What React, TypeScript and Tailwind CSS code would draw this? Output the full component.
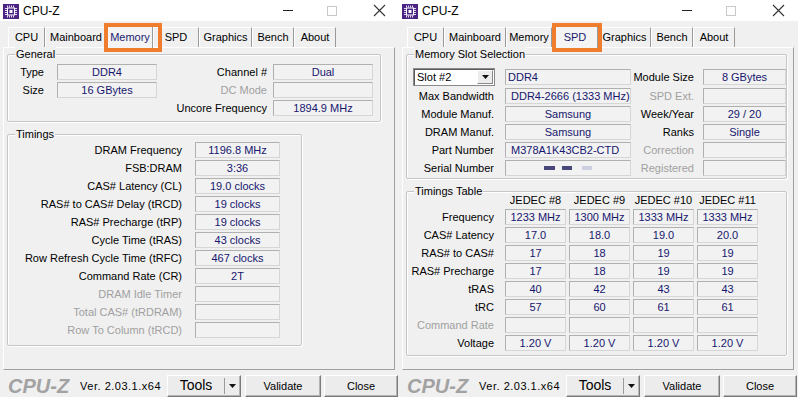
import React from "react";

const VALUE = "text-[#16166e]";
const DIM = "text-[#a0a0a0]";

const tabWidths: Record<string, string> = {
  CPU: "w-[37px]",
  Mainboard: "w-[62px]",
  Memory: "w-[46px]",
  SPD: "w-[46px]",
  Graphics: "w-[53px]",
  Bench: "w-[42px]",
  About: "w-[42px]",
};

function Field({
  children,
  className = "",
  left = false,
}: {
  children?: React.ReactNode;
  className?: string;
  left?: boolean;
}) {
  return (
    <div
      className={`h-[16px] shrink-0 flex items-center border border-t-[#b0b0b0] border-l-[#b0b0b0] border-r-[#d6d6d6] border-b-[#d6d6d6] bg-[#f2f2f2] leading-none whitespace-nowrap ${VALUE} ${
        left ? "justify-start" : "justify-center"
      } ${className}`}
    >
      {children}
    </div>
  );
}

function Group({
  label,
  className,
  children,
}: {
  label: string;
  className: string;
  children: React.ReactNode;
}) {
  return (
    <div
      className={`relative shrink-0 border border-[#c6c6c6] rounded-[2px] shadow-[inset_1px_1px_0_#fff,1px_1px_0_#fff] ${className}`}
    >
      <span className="absolute -top-[8px] left-[7px] bg-[#f0f0f0] px-px leading-[14px]">
        {label}
      </span>
      {children}
    </div>
  );
}

function ChipIcon() {
  return (
    <svg width="16" height="15" viewBox="0 0 16 15">
      <rect width="16" height="15" fill="#4a2581" />
      <rect x="4.5" y="4" width="7" height="7" fill="none" stroke="#fff" strokeWidth="1" />
      <rect x="6.5" y="6" width="3" height="3" fill="#fff" />
      {[5, 7, 9, 11].map((p) => (
        <g key={p} stroke="#e6dcf5" strokeWidth="1">
          <line x1={p - 0.5} y1="1.5" x2={p - 0.5} y2="3.5" />
          <line x1={p - 0.5} y1="11.5" x2={p - 0.5} y2="13.5" />
          <line x1="2" y1={p - 0.5} x2="4" y2={p - 0.5} />
          <line x1="12" y1={p - 0.5} x2="14" y2={p - 0.5} />
        </g>
      ))}
    </svg>
  );
}

function TitleBar() {
  return (
    <div className="h-[21px] bg-white flex items-center shrink-0">
      <div className="ml-[3px] mt-px">
        <ChipIcon />
      </div>
      <span className="ml-[4px] text-[12px] text-black">CPU-Z</span>
      <div className="ml-auto flex items-center mr-[13px]">
        <div className="w-[10px] h-px bg-[#222]" />
        <div className="ml-[34px] w-[10px] h-[10px] border border-[#c8c8c8]" />
        <svg className="ml-[36px]" width="13" height="13" viewBox="0 0 13 13">
          <path d="M1 1 L12 12 M12 1 L1 12" stroke="#333" strokeWidth="1.1" />
        </svg>
      </div>
    </div>
  );
}

function Tabs({ selected }: { selected: string }) {
  return (
    <div className="h-[22px] mt-[4px] pl-[8px] flex items-end shrink-0">
      {Object.keys(tabWidths).map((t) => {
        const on = t === selected;
        return (
          <div
            key={t}
            className={`${tabWidths[t]} flex items-center justify-center border-t border-l border-r border-t-white border-l-white border-r-[#9a9a9a] ${
              on ? "h-[22px] bg-[#f4f4f4] relative z-10 -mb-px text-[#1a1a70]" : "h-[20px]"
            }`}
          >
            {t}
          </div>
        );
      })}
    </div>
  );
}

function BottomBar() {
  return (
    <div className="h-[27px] shrink-0 flex items-start pt-[5px] pl-[8px] pr-px">
      <span className="shrink-0 whitespace-nowrap text-[20px] leading-[22px] italic font-bold text-[#a2a2a2]">
        CPU-Z
      </span>
      <span className="shrink-0 whitespace-nowrap ml-[11px] text-[11px] leading-[23px] tracking-[0.5px]">
        Ver. 2.03.1.x64
      </span>
      <div className="ml-auto flex shrink-0">
        <div className="w-[74px] h-[22px] flex border border-t-white border-l-white border-r-[#7a7a7a] border-b-[#7a7a7a] bg-[#ececec] shadow-[inset_-1px_-1px_0_#b4b4b4]">
          <div className="flex-1 flex items-center justify-center text-[14px] pb-[2px]">Tools</div>
          <div className="w-px my-[2px] bg-[#9a9a9a]" />
          <div className="w-[15px] flex items-center justify-center">
            <svg width="7" height="4" viewBox="0 0 7 4">
              <path d="M0 0 H7 L3.5 4 Z" fill="#111" />
            </svg>
          </div>
        </div>
        <div className="ml-[4px] w-[76px] h-[22px] flex items-center justify-center border border-t-white border-l-white border-r-[#7a7a7a] border-b-[#7a7a7a] bg-[#ececec] shadow-[inset_-1px_-1px_0_#b4b4b4]">
          Validate
        </div>
        <div className="ml-[3px] w-[74px] h-[22px] flex items-center justify-center border border-t-white border-l-white border-r-[#7a7a7a] border-b-[#7a7a7a] bg-[#ececec] shadow-[inset_-1px_-1px_0_#b4b4b4]">
          Close
        </div>
      </div>
    </div>
  );
}

function Window({
  selected,
  boxClass,
  children,
}: {
  selected: string;
  boxClass: string;
  children: React.ReactNode;
}) {
  return (
    <div className="relative w-[399px] h-[397px] flex flex-col bg-[#f0f0f0] overflow-hidden">
      <TitleBar />
      <Tabs selected={selected} />
      <div className="ml-[3px] w-[392px] h-[323px] shrink-0 border border-t-white border-l-white border-r-[#a0a0a0] border-b-[#a0a0a0] pl-[3px] flex flex-col">
        {children}
      </div>
      <BottomBar />
      <div className={`absolute top-[23px] h-[29px] border-[4px] border-[#ef7d2d] z-20 ${boxClass}`} />
    </div>
  );
}

const timings: [string, string, boolean?][] = [
  ["DRAM Frequency", "1196.8 MHz"],
  ["FSB:DRAM", "3:36"],
  ["CAS# Latency (CL)", "19.0 clocks"],
  ["RAS# to CAS# Delay (tRCD)", "19 clocks"],
  ["RAS# Precharge (tRP)", "19 clocks"],
  ["Cycle Time (tRAS)", "43 clocks"],
  ["Row Refresh Cycle Time (tRFC)", "467 clocks"],
  ["Command Rate (CR)", "2T"],
  ["DRAM Idle Timer", "", true],
  ["Total CAS# (tRDRAM)", "", true],
  ["Row To Column (tRCD)", "", true],
];

function MemoryPanel() {
  return (
    <>
      <Group label="General" className="mt-[6px] w-[374px] h-[68px]">
        <div className="pt-[9px] flex flex-col gap-[2px]">
          <div className="flex items-center h-[16px]">
            <span className="w-[36px] text-right">Type</span>
            <Field className="ml-[13px] w-[100px]">DDR4</Field>
            <span className="w-[110px] text-right">Channel #</span>
            <Field className="ml-[6px] w-[100px]">Dual</Field>
          </div>
          <div className="flex items-center h-[16px]">
            <span className="w-[36px] text-right">Size</span>
            <Field className="ml-[13px] w-[100px]">16 GBytes</Field>
            <span className={`w-[110px] text-right ${DIM}`}>DC Mode</span>
            <Field className="ml-[6px] w-[100px]" />
          </div>
          <div className="flex items-center h-[16px]">
            <span className="w-[149px]" />
            <span className="w-[110px] text-right">Uncore Frequency</span>
            <Field className="ml-[6px] w-[100px]">1894.9 MHz</Field>
          </div>
        </div>
      </Group>
      <Group label="Timings" className="mt-[12px] w-[295px] h-[212px]">
        <div className="pt-[7px] flex flex-col gap-[2px]">
          {timings.map(([l, v, dim]) => (
            <div key={l} className="flex items-center h-[16px]">
              <span className={`w-[174px] text-right whitespace-nowrap ${dim ? DIM : ""}`}>{l}</span>
              <Field className="ml-[13px] w-[85px]">{v}</Field>
            </div>
          ))}
        </div>
      </Group>
    </>
  );
}

const slotRows: [string, React.ReactNode, boolean, string, string, boolean][] = [
  ["Max Bandwidth", "DDR4-2666 (1333 MHz)", true, "SPD Ext.", "", true],
  ["Module Manuf.", "Samsung", false, "Week/Year", "29 / 20", false],
  ["DRAM Manuf.", "Samsung", false, "Ranks", "Single", false],
  ["Part Number", "M378A1K43CB2-CTD", true, "Correction", "", true],
];

const jedec: [string, string[], boolean?][] = [
  ["Frequency", ["1233 MHz", "1300 MHz", "1333 MHz", "1333 MHz"]],
  ["CAS# Latency", ["17.0", "18.0", "19.0", "20.0"]],
  ["RAS# to CAS#", ["17", "18", "19", "19"]],
  ["RAS# Precharge", ["17", "18", "19", "19"]],
  ["tRAS", ["40", "42", "43", "43"]],
  ["tRC", ["57", "60", "61", "61"]],
  ["Command Rate", ["", "", "", ""], true],
  ["Voltage", ["1.20 V", "1.20 V", "1.20 V", "1.20 V"]],
];

function SpdPanel() {
  return (
    <>
      <Group label="Memory Slot Selection" className="mt-[6px] w-[381px] h-[125px]">
        <div className="pt-[13px] flex flex-col gap-[2px]">
          <div className="flex items-center h-[18px]">
            <div className="ml-[6px] w-[82px] h-[18px] flex bg-white border border-[#8a8a8a] shadow-[inset_1px_1px_0_#5a5a5a]">
              <span className="flex-1 pl-[3px] leading-[16px] text-black">Slot #2</span>
              <div className="w-[16px] my-px mr-px bg-[#ececec] border border-t-white border-l-white border-r-[#8a8a8a] border-b-[#8a8a8a] flex items-center justify-center">
                <svg width="7" height="4" viewBox="0 0 7 4">
                  <path d="M0 0 H7 L3.5 4 Z" fill="#111" />
                </svg>
              </div>
            </div>
            <Field left className="ml-[10px] w-[126px] pl-[2px]">DDR4</Field>
            <span className="w-[63px] text-right">Module Size</span>
            <Field className="ml-[9px] w-[83px]">8 GBytes</Field>
          </div>
          {slotRows.map(([l, v, left, r, rv, dim]) => (
            <div key={l} className="flex items-center h-[16px]">
              <span className="w-[87px] text-right">{l}</span>
              <Field left={left} className={`ml-[11px] w-[126px] ${left ? "pl-[5px]" : ""}`}>
                {v}
              </Field>
              <span className={`w-[63px] text-right ${dim ? DIM : ""}`}>{r}</span>
              <Field className="ml-[9px] w-[83px]">{rv}</Field>
            </div>
          ))}
          <div className="flex items-center h-[16px]">
            <span className="w-[87px] text-right">Serial Number</span>
            <Field className="ml-[11px] w-[126px]">
              <span className="w-[11px] h-[4px] bg-[#47477a]" />
              <span className="ml-[7px] w-[10px] h-[4px] bg-[#47477a]" />
              <span className="ml-[10px] w-[10px] h-[4px] bg-[#cfcfe2]" />
            </Field>
            <span className={`w-[63px] text-right ${DIM}`}>Registered</span>
            <Field className="ml-[9px] w-[83px]" />
          </div>
        </div>
      </Group>
      <Group label="Timings Table" className="mt-[12px] w-[381px] h-[165px]">
        <div className="flex items-center h-[17px]">
          <span className="w-[98px]" />
          <div className="flex gap-[3px]">
            {["JEDEC #8", "JEDEC #9", "JEDEC #10", "JEDEC #11"].map((h) => (
              <span key={h} className="w-[61px] text-center whitespace-nowrap">
                {h}
              </span>
            ))}
          </div>
        </div>
        <div className="flex flex-col gap-[2px]">
          {jedec.map(([l, vals, dim]) => (
            <div key={l} className="flex items-center h-[16px]">
              <span className={`w-[87px] text-right ${dim ? DIM : ""}`}>{l}</span>
              <div className="ml-[11px] flex gap-[3px]">
                {vals.map((v, i) => (
                  <Field key={i} className="w-[61px]">
                    {v}
                  </Field>
                ))}
              </div>
            </div>
          ))}
        </div>
      </Group>
    </>
  );
}

export default function App() {
  return (
    <div className="w-[798px] h-[397px] flex bg-[#f0f0f0] text-[11px] text-black font-['Liberation_Sans',Arial,sans-serif] overflow-hidden">
      <Window selected="Memory" boxClass="left-[104px] w-[58px]">
        <MemoryPanel />
      </Window>
      <Window selected="SPD" boxClass="left-[153px] w-[50px]">
        <SpdPanel />
      </Window>
    </div>
  );
}
